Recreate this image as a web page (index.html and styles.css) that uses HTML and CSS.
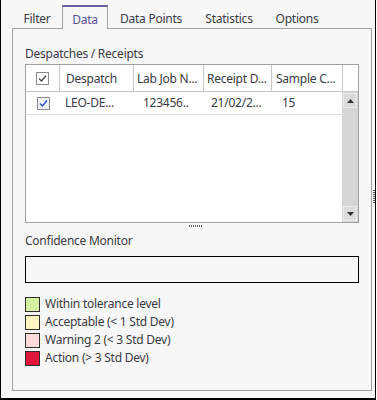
FILE: index.html
```html
<!DOCTYPE html>
<html>
<head>
<meta charset="utf-8">
<link rel="stylesheet" href="styles.css">
</head>
<body>
<div class="window">
  <div class="tabs">
    <div class="tab t-filter">Filter</div>
    <div class="tab t-data active">Data</div>
    <div class="tab t-points">Data Points</div>
    <div class="tab t-stats">Statistics</div>
    <div class="tab t-options">Options</div>
  </div>
  <div class="panel">
    <div class="section-label first">Despatches / Receipts</div>
    <div class="grid">
      <div class="grid-head">
        <div class="hc c-check">
          <svg class="cb" width="13" height="13" viewBox="0 0 13 13"><rect x="0.5" y="0.5" width="12" height="12" fill="#fff" stroke="#8a8a8a"/><path d="M3 6.5 L5.5 9 L10 3.8" fill="none" stroke="#444" stroke-width="1.3"/></svg>
        </div>
        <div class="hc c-desp">Despatch</div>
        <div class="hc c-lab">Lab Job N...</div>
        <div class="hc c-rec">Receipt D...</div>
        <div class="hc c-samp">Sample C...</div>
        <div class="hc c-scroll"></div>
      </div>
      <div class="grid-body">
        <div class="rows">
          <div class="row">
            <div class="cell c-check">
              <svg class="cb" width="13" height="13" viewBox="0 0 13 13"><rect x="0.5" y="0.5" width="12" height="12" fill="#eef1f7" stroke="#8c8c8c"/><path d="M3 6.5 L5.5 9 L10 3.5" fill="none" stroke="#3057c4" stroke-width="1.5"/></svg>
            </div>
            <div class="cell c-desp r-desp">LEO-DE...</div>
            <div class="cell c-lab r-lab">123456..</div>
            <div class="cell c-rec r-rec">21/02/2...</div>
            <div class="cell c-samp r-samp">15</div>
          </div>
        </div>
        <div class="vscroll">
          <div class="sbtn"><svg width="7" height="4" viewBox="0 0 7 4"><path d="M0 4 L3.5 0 L7 4 Z" fill="#333"/></svg></div>
          <div class="track"></div>
          <div class="sbtn"><svg width="7" height="4" viewBox="0 0 7 4"><path d="M0 0 L7 0 L3.5 4 Z" fill="#333"/></svg></div>
        </div>
      </div>
    </div>
    <div class="splitter"><span class="hgrip"></span></div>
    <div class="section-label">Confidence Monitor</div>
    <div class="monitor"></div>
    <ul class="legend">
      <li><span class="sw sw-green"></span>Within tolerance level</li>
      <li><span class="sw sw-yellow"></span>Acceptable (&lt; 1 Std Dev)</li>
      <li><span class="sw sw-pink"></span>Warning 2 (&lt; 3 Std Dev)</li>
      <li><span class="sw sw-red"></span>Action (&gt; 3 Std Dev)</li>
    </ul>
  </div>
  <div class="vgrip"></div>
</div>
</body>
</html>
```
FILE: styles.css
```css
html, body {
  margin: 0;
  padding: 0;
  background: #ffffff;
}
body {
  font-family: "Noto Sans", "Open Sans", sans-serif;
  font-size: 12px;
  letter-spacing: -0.25px;
  color: #3a3a44;
}
.window {
  position: relative;
  box-sizing: border-box;
  width: 376px;
  height: 400px;
  background: #f7f7f7;
  border-left: 1px solid #000;
  border-right: 1px solid #000;
  border-bottom: 2px solid #000;
}
.tabs {
  display: flex;
  height: 28px;
  margin-left: 11px;
  align-items: flex-end;
}
.tab {
  box-sizing: border-box;
  height: 23px;
  padding-top: 3px;
  line-height: 22px;
  text-align: center;
  white-space: nowrap;
  color: #3a3a44;
}
.tab.active {
  position: relative;
  z-index: 2;
  height: 24px;
  margin-bottom: -1px;
  padding-top: 2px;
  background: #f7f7f7;
  border-top: 2px solid #6a5da3;
  border-left: 1px solid #a0a0a0;
  border-right: 1px solid #a0a0a0;
  line-height: 21px;
  color: #5a4f96;
}
.t-filter { width: 50px; }
.t-data { width: 46px; }
.t-points { width: 86px; }
.t-stats { width: 70px; }
.t-options { width: 66px; }

.panel {
  box-sizing: border-box;
  width: 360px;
  height: 363px;
  margin-left: 11px;
  padding: 0 12px;
  border: 1px solid #a0a0a0;
}
.section-label {
  height: 16px;
  line-height: 16px;
  white-space: nowrap;
}
.section-label.first {
  margin-top: 17px;
  margin-bottom: 2px;
}
.grid {
  box-sizing: border-box;
  width: 334px;
  height: 159px;
  border: 1px solid #a0a0a0;
  background: #fff;
  display: flex;
  flex-direction: column;
}
.grid-head {
  display: flex;
  height: 26px;
  border-bottom: 1px solid #c8c8c8;
}
.hc {
  box-sizing: border-box;
  height: 26px;
  line-height: 27px;
  border-right: 1px solid #c8c8c8;
  white-space: nowrap;
  overflow: hidden;
}
.hc.c-scroll { border-right: none; }
.c-check {
  width: 34px;
  display: flex;
  align-items: center;
  justify-content: center;
}
.c-desp { width: 74px; padding-left: 6px; }
.c-lab { width: 70px; padding-left: 3px; }
.c-rec { width: 68px; padding-left: 3px; }
.c-samp { width: 71px; padding-left: 4px; }
.c-scroll { width: 15px; }
.hc.c-check { padding-left: 0; }

.grid-body {
  flex: 1;
  display: flex;
  min-height: 0;
}
.rows {
  width: 316px;
}
.row {
  display: flex;
  height: 22px;
  border-bottom: 1px solid #e2e2e2;
}
.cell {
  box-sizing: border-box;
  height: 22px;
  line-height: 22px;
  white-space: nowrap;
  overflow: hidden;
}
.row .c-check { padding-left: 0; }
.r-desp { padding-left: 5px; }
.r-lab { padding-left: 9px; }
.r-rec { padding-left: 7px; }
.r-samp { width: 70px; padding-left: 10px; }

.vscroll {
  width: 16px;
  background: #d6d6d6;
  display: flex;
  flex-direction: column;
}
.sbtn {
  box-sizing: border-box;
  height: 15px;
  margin: 1px;
  background: #dcdcdc;
  border: 1px solid #ececec;
  display: flex;
  align-items: center;
  justify-content: center;
}
.track { flex: 1; }

.splitter {
  height: 10px;
  display: flex;
  justify-content: center;
}
.hgrip {
  display: block;
  width: 13px;
  height: 2px;
  margin-top: 2px;
  margin-left: 6px;
  background: repeating-linear-gradient(90deg, #666 0 1px, transparent 1px 2px);
}
.monitor {
  box-sizing: border-box;
  height: 27px;
  margin-top: 7px;
  border: 1px solid #000;
}
.legend {
  list-style: none;
  margin: 13px 0 0;
  padding: 0;
}
.legend li {
  display: flex;
  align-items: center;
  height: 18px;
  line-height: 16px;
  white-space: nowrap;
}
.legend li:first-child { margin-top: -1px; }
.sw {
  box-sizing: border-box;
  width: 15px;
  height: 15px;
  margin-right: 5px;
  border: 1px solid #2e2e2e;
  flex: none;
}
.sw-green { background: #d4f1a1; }
.sw-yellow { background: #fff5c2; }
.sw-pink { background: #ffdcdc; }
.sw-red { background: #e0173b; }

.vgrip {
  position: absolute;
  left: 372px;
  top: 190px;
  width: 2px;
  height: 14px;
  background: repeating-linear-gradient(180deg, #555 0 1px, transparent 1px 2px);
}
```
